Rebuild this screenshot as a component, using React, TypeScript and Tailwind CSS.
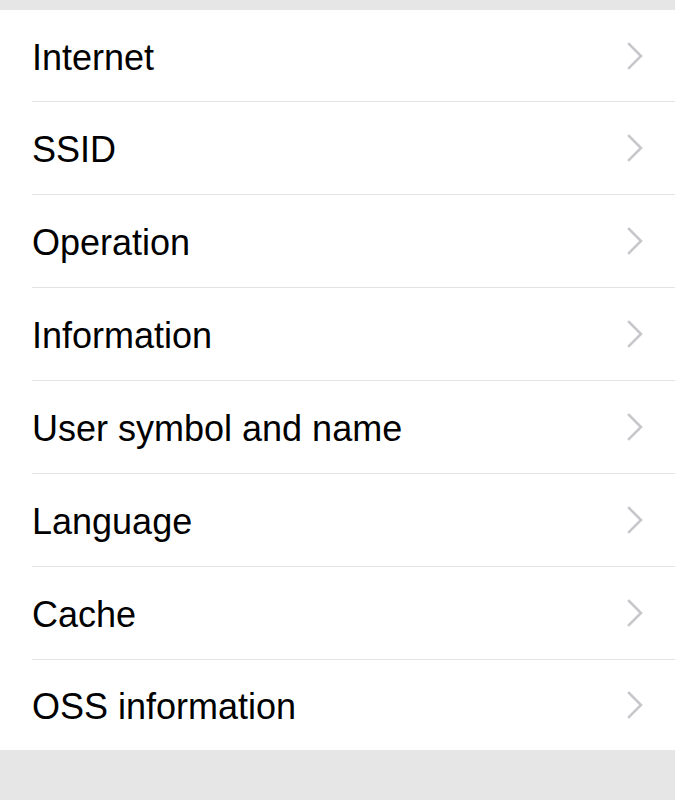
import React from 'react';

const items = [
  'Internet',
  'SSID',
  'Operation',
  'Information',
  'User symbol and name',
  'Language',
  'Cache',
  'OSS information',
];

function Chevron() {
  return (
    <svg width="16" height="28" viewBox="0 0 16 28" fill="none" className="shrink-0">
      <path d="M2 2 L14 14 L2 26" stroke="#c7c7cc" strokeWidth={2.6} strokeLinecap="square" strokeLinejoin="miter" />
    </svg>
  );
}

export default function App() {
  return (
    <div className="w-[675px] h-[800px] bg-[#e6e6e6] flex flex-col" style={{ fontFamily: '"Liberation Sans", Arial, sans-serif' }}>
      <div className="h-[10px] shrink-0" />
      <ul className="bg-white pl-[32px]">
        {items.map((label, i) => {
          const isFirst = i === 0;
          const isLast = i === items.length - 1;
          return (
            <li
              key={label}
              className={
                'flex items-center justify-between pr-[32px] ' +
                (isFirst ? 'h-[92px] ' : isLast ? 'h-[90px] ' : 'h-[93px] ') +
                (isLast ? '' : 'border-b border-[#e3e3e6]')
              }
            >
              <span className="text-[36px] leading-none text-black pt-[4px]">{label}</span>
              <Chevron />
            </li>
          );
        })}
      </ul>
    </div>
  );
}
